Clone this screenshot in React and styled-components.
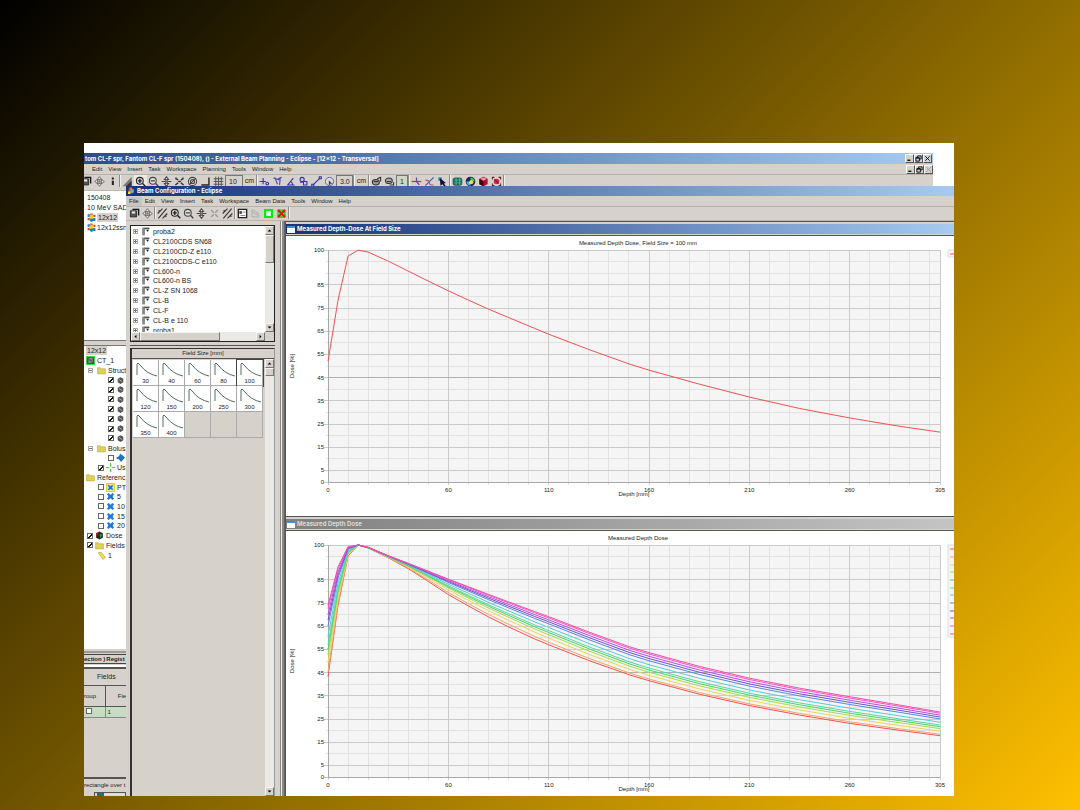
import React from "react"
import styled, { createGlobalStyle, css } from "styled-components"

const GlobalStyle = createGlobalStyle`
  * {
    box-sizing: border-box;
  }
  body {
    margin: 0;
    font-family: "Liberation Sans", Arial, sans-serif;
    font-size: 7px;
    color: #222;
  }
  button, input {
    font: inherit;
    color: inherit;
    margin: 0;
    padding: 0;
  }
`

const Slide = styled.main`
  display: flex;
  min-height: 100vh;
  padding: 143px 126px 14px 84px;
  background: linear-gradient(135deg, #000, #ffc000);
`

const Desktop = styled.div`
  position: relative;
  flex: 1;
  display: flex;
  min-width: 0;
  padding: 10px 21px 0 0;
  background: #fff;
  overflow: hidden;
`

const PlanningWindow = styled.section`
  flex: 1;
  display: flex;
  flex-direction: column;
  min-width: 0;
  background: #d6d2cb;
`

/* Floats over the planning window */
const ConfigWindow = styled.section`
  position: absolute;
  top: 43px;
  right: 0;
  bottom: 0;
  left: 42px;
  display: flex;
  flex-direction: column;
  background: #d6d2cb;
`

const titleColors = {
  back: "linear-gradient(90deg, #2b4c8e, #a6caf0)",
  front: "linear-gradient(90deg, #16327a, #a6caf0)",
  idle: "linear-gradient(90deg, #808080, #c4c4c4)",
}

const TitleBar = styled.header`
  flex: none;
  display: flex;
  align-items: center;
  gap: 2px;
  height: ${props => props.$height || 10}px;
  padding: 0 1px;
  background: ${props => titleColors[props.$kind]};
  color: ${props => (props.$kind === "idle" ? "#dedad2" : "#fff")};
  white-space: nowrap;
  overflow: hidden;
`

const Title = styled.h1`
  flex: 1;
  margin: 0;
  font-family: Inter, "Liberation Sans", sans-serif;
  font-size: 6px;
  line-height: 10px;
  font-weight: 700;
`

const MenuBar = styled.nav`
  flex: none;
  display: flex;
  align-items: center;
  height: ${props => props.$height}px;
  padding-left: ${props => props.$indent || 0}px;
  border-bottom: 1px solid #b2b2ae;
`

const MenuItem = styled.button`
  height: 9px;
  padding: 0 3px;
  border: 0;
  background: ${props => (props.$open ? "#c9c5be" : "none")};
  font-size: 6px;
  line-height: 9px;
`

const Spacer = styled.div`
  flex: 1;
`

const WindowButtons = styled.div`
  display: flex;
`

const WindowButton = styled.button`
  display: grid;
  place-items: center;
  width: 9px;
  height: 9px;
  border: 1px solid;
  border-color: #fff #555 #555 #fff;
  background: #d6d2cb;
  color: ${props => (props.$dim ? "#999" : "#000")};
`

const ToolBar = styled.div`
  flex: none;
  display: flex;
  align-items: flex-start;
  height: ${props => props.$height}px;
  margin-left: ${props => (props.$clipped ? "-4px" : "0")};
  padding-left: ${props => props.$indent || 0}px;
  border-bottom: 1px solid #bbb7b0;
  overflow: hidden;
`

const ToolButton = styled.button`
  flex: none;
  display: grid;
  place-items: center;
  width: 13px;
  height: 13px;
  border: 0;
  background: ${props => (props.$pressed ? "#ebe9e4" : "none")};
`

const Divider = styled.span`
  flex: none;
  width: 2px;
  height: 12px;
  border-left: 1px solid #8e8b85;
  border-right: 1px solid #f4f2ee;
`

const ToolInput = styled.input`
  flex: none;
  width: ${props => props.$width}px;
  height: 12px;
  padding-left: 3px;
  border: 1px solid #777;
  background: ${props => (props.$green ? "#c5dcc3" : "#d6d2cb")};
  font-size: 7px;
`

const Unit = styled.span`
  width: 13px;
  text-align: center;
  font-size: 7px;
  line-height: 12px;
`

/* Left edge of the planning window */
const PlanPane = styled.div`
  flex: 1;
  display: flex;
  flex-direction: column;
  width: 42px;
  overflow: hidden;
`

const PatientTree = styled.ul`
  flex: none;
  height: 150px;
  margin: 0;
  padding: 1px 0 0 3px;
  border-bottom: 1px solid #777;
  background: #fff;
  list-style: none;
  white-space: nowrap;
`

const PatientRow = styled.li`
  display: flex;
  align-items: center;
  gap: 1px;
  height: 10px;
  font-size: 7px;
`

const Mark = styled.span`
  padding: 1px;
  background: #d6d2cb;
`

const StructurePane = styled.div`
  flex: 1;
  margin-top: 4px;
  border-top: 1px solid #777;
  background: #fff;
`

const StructureTree = styled.ul`
  display: grid;
  grid-auto-rows: 1fr;
  height: 214px;
  margin: 0;
  padding: 0;
  list-style: none;
`

const StructureRow = styled.li`
  display: flex;
  align-items: center;
  gap: 2px;
  min-height: 0;
  padding-left: ${props => props.$depth}px;
  white-space: nowrap;
  font-size: 7px;
`

const Expander = styled.span`
  flex: none;
  display: grid;
  place-items: center;
  width: 5px;
  height: 5px;
  border: 1px solid #aaa;
  background: ${props =>
    props.$plus
      ? "linear-gradient(#777, #777) center / 1px 3px no-repeat #fff"
      : "#fff"};
  &:before {
    content: "";
    width: 3px;
    height: 1px;
    background: #777;
  }
  ${props =>
    !props.$plus &&
    css`
      margin-right: 2px;
    `}
`

const CheckBox = styled.input.attrs({ type: "checkbox" })`
  appearance: none;
  flex: none;
  width: 6px;
  height: 6px;
  border: 1px solid #666;
  background: #fff;
  &:checked {
    background: linear-gradient(135deg, #fff 45%, #111 45% 70%, #fff 70%);
  }
`

const TabStrip = styled.div`
  flex: none;
  display: flex;
  align-items: center;
  height: 16px;
  margin-top: 2px;
  border-top: 2px solid #999;
  border-bottom: 2px solid #fff;
`

const Tab = styled.button`
  height: 10px;
  padding: 0 1px 0 0;
  border: 0;
  border-top: 1px solid #444;
  border-bottom: 1px solid #444;
  background: none;
  font-size: 6px;
  font-weight: 700;
  white-space: nowrap;
`

const FieldsCaption = styled.h2`
  flex: none;
  height: 18px;
  margin: 0;
  padding-left: 13px;
  border-top: 2px solid #555;
  font-size: 7px;
  line-height: 15px;
  font-weight: 400;
`

const FieldsTable = styled.table`
  flex: none;
  width: 60px;
  border-collapse: collapse;
  border-top: 1px solid #555;
  table-layout: fixed;
  font-size: 6px;
  th {
    height: 21px;
    padding: 0;
    border-right: 1px solid #555;
    border-bottom: 1px solid #555;
    font-weight: 400;
  }
  th:first-child, td:first-child {
    width: 21px;
    text-align: left;
  }
  td {
    height: 11px;
    padding: 0 2px;
    border-right: 1px solid #888;
    border-bottom: 1px solid #888;
    background: #c5dcc3;
    line-height: 7px;
  }
`

const StatusArea = styled.div`
  flex: none;
  height: 78px;
  display: flex;
  flex-direction: column;
  justify-content: flex-end;
`

const StatusText = styled.p`
  margin: 0;
  border-top: 2px solid #555;
  font-size: 6px;
  line-height: 13px;
  white-space: nowrap;
`

const TaskStrip = styled.div`
  height: 4px;
  margin-left: 10px;
  border: 1px solid #555;
  border-bottom: 0;
  background: linear-gradient(90deg, #d6d2cb 2px, #177 2px 9px, #ddd 9px);
`

/* Beam configuration body */
const ConfigBody = styled.div`
  flex: 1;
  display: flex;
  min-height: 0;
`

const SideBar = styled.aside`
  flex: none;
  display: flex;
  flex-direction: column;
  width: 149px;
  padding: 4px 0 0 4px;
`

const MachineBox = styled.div`
  flex: none;
  display: grid;
  grid-template: 106px 9px / minmax(0, 1fr) 9px;
  border: 1px solid #222;
  background: #fff;
`

const MachineList = styled.ul`
  margin: 0;
  padding: 1px 0 0;
  list-style: none;
  overflow: hidden;
`

const MachineRows = styled.div`
  display: grid;
  grid-auto-rows: 1fr;
  height: 108px;
`

const Machine = styled.li`
  display: flex;
  align-items: center;
  gap: 3px;
  padding-left: 2px;
  font-size: 7px;
  line-height: 9px;
  white-space: nowrap;
`

const ScrollTrack = styled.div`
  display: flex;
  flex-direction: ${props => (props.$across ? "row" : "column")};
  background: #ebe9e5;
`

const ScrollButton = styled.button`
  flex: none;
  display: grid;
  place-items: center;
  width: 9px;
  height: 9px;
  border: 1px solid;
  border-color: #f6f4f0 #777 #777 #f6f4f0;
  background: #d6d2cb;
`

const ScrollThumb = styled.div`
  flex: none;
  width: ${props => (props.$across ? props.$size + "px" : "9px")};
  height: ${props => (props.$across ? "9px" : props.$size + "px")};
  border: 1px solid;
  border-color: #f6f4f0 #777 #777 #f6f4f0;
  background: #d6d2cb;
`

const Corner = styled.div`
  background: #d6d2cb;
`

const FieldPanel = styled.section`
  flex: 1;
  display: flex;
  flex-direction: column;
  min-height: 0;
  margin-top: 3px;
  border-top: 1px solid #555;
`

const FieldFrame = styled.div`
  flex: 1;
  display: flex;
  flex-direction: column;
  min-height: 0;
  margin-top: 2px;
  border: 1px solid #333;
  border-left-width: 2px;
  border-right-color: #999;
  border-bottom: 0;
`

const FieldHeading = styled.h2`
  flex: none;
  height: 10px;
  margin: 0;
  border-bottom: 1px solid #555;
  font-size: 6px;
  line-height: 9px;
  font-weight: 400;
  text-align: center;
`

const FieldArea = styled.div`
  flex: 1;
  display: grid;
  grid-template-columns: minmax(0, 1fr) 9px;
  min-height: 0;
`

const FieldGrid = styled.div`
  display: grid;
  grid-template-columns: repeat(5, 26px);
  grid-auto-rows: 26px;
  align-content: start;
  padding: 1px 0 0 1px;
`

const FieldCell = styled.button`
  display: flex;
  flex-direction: column;
  align-items: center;
  justify-content: flex-end;
  border: 0;
  border-right: 1px solid #aaa;
  border-bottom: 1px solid #aaa;
  background: ${props => (props.$empty ? "#d6d2cb" : "#fff")};
  font-size: 6px;
  line-height: 7px;
  ${props =>
    props.$selected &&
    css`
      outline: 1px solid #444;
    `}
`

const Splitter = styled.div`
  flex: none;
  width: 10px;
  border-left: 5px solid #d6d2cb;
  border-right: 1px solid #666;
  background: linear-gradient(90deg, #888 1px, #eee 1px 2px, #8d8a85 2px);
`

const ChartStack = styled.div`
  flex: 1;
  display: flex;
  flex-direction: column;
  min-width: 0;
  border-top: 1px solid #555;
  border-left: 1px solid #555;
  overflow: hidden;
`

const ChartWindow = styled.section`
  flex: none;
  padding-top: 2px;
  border-bottom: 1px solid #555;
`

const ChartBody = styled.div`
  margin-top: 1px;
  border-top: 1px solid #555;
  background: #fff;
  svg {
    display: block;
    width: 100%;
    height: auto;
  }
`

const PageIcon = styled.span`
  flex: none;
  width: 8px;
  height: 7px;
  border-top: 2px solid #3a8ee0;
  background: #fff;
`

// Toolbar drawings, all on a 16 x 16 grid
const glyphs = {
  disk: (
    <>
      <path d="M2 4h9v9H2z" fill="#555" stroke="#111" />
      <path d="M5 2h9v9" fill="none" stroke="#111" strokeWidth="2" />
      <path d="M4 5h5v3H4z" fill="#eee" />
    </>
  ),
  move: (
    <path
      d="M8 1l3 4H5zM8 15l3-4H5zM1 8l4-3v6zM15 8l-4-3v6zM7 7h2v2H7z"
      fill="#eee"
      stroke="#444"
    />
  ),
  dots: <path d="M7 2h3v3H7zM7 7h3v6H7z" fill="#222" />,
  ramp: (
    <>
      <path d="M14 1v14H1z" fill="#777" />
      <path d="M14 7v8H6z" fill="#333" />
    </>
  ),
  zoomIn: (
    <g fill="none" stroke="#222" strokeWidth="1.5">
      <circle cx="7" cy="7" r="5" fill="#ddd" />
      <path d="M4 7h6M7 4v6M11 11l4 4" strokeWidth="2" />
    </g>
  ),
  zoomOut: (
    <g fill="none" stroke="#444" strokeWidth="1.5">
      <circle cx="7" cy="7" r="5" fill="#ddd" />
      <path d="M4 7h6M11 11l4 4" strokeWidth="2" />
    </g>
  ),
  pan: (
    <g fill="#ddd" stroke="#444" strokeWidth="1.5">
      <path d="M8 1l3 4H9v6h2l-3 4-3-4h2V5H5z" />
      <path d="M1 8h5M10 8h5" />
    </g>
  ),
  fit: (
    <path
      d="M2 3l4 3M14 3l-4 3M2 13l4-3M14 13l-4-3M6 8h4M3 2v3M13 2v3"
      fill="none"
      stroke="#333"
      strokeWidth="2"
    />
  ),
  fitDim: (
    <path
      d="M3 3l4 4M13 3l-4 4M3 13l4-4M13 13l-4-4"
      fill="none"
      stroke="#999"
      strokeWidth="2"
    />
  ),
  target: (
    <g fill="none" stroke="#444" strokeWidth="1.5">
      <circle cx="8" cy="8" r="6" />
      <circle cx="8" cy="8" r="3" />
      <path d="M3 13L13 3" />
    </g>
  ),
  corner: <path d="M13 2v11H2" fill="none" stroke="#222" strokeWidth="2" />,
  grid: (
    <path
      d="M4 1v14M8 1v14M12 1v14M1 4h14M1 8h14M1 12h14"
      stroke="#555"
      fill="none"
      strokeWidth="1.4"
    />
  ),
  plusA: (
    <g fill="none" stroke="#3535a0" strokeWidth="1.6">
      <path d="M1 8h9M6 3v9" />
      <circle cx="12" cy="11" r="2" />
    </g>
  ),
  fan: (
    <path
      d="M2 3l10 3M4 2l4 10M12 2l-1 11M9 4l5-2"
      fill="none"
      stroke="#4a4ab0"
      strokeWidth="1.6"
    />
  ),
  angle: (
    <path
      d="M12 3L4 13h10M8 8q3 1 3 5"
      fill="none"
      stroke="#3535a0"
      strokeWidth="1.6"
    />
  ),
  shapes: (
    <g fill="none" stroke="#3535a0" strokeWidth="1.6">
      <circle cx="6" cy="5" r="3" />
      <path d="M8 8h5v5H8zM3 9h4" />
    </g>
  ),
  line: (
    <g fill="none" stroke="#3535a0" strokeWidth="1.6">
      <path d="M3 13L13 3" />
      <path d="M1 12h3v3H1zM12 1h3v3h-3z" />
    </g>
  ),
  pick: (
    <g>
      <circle cx="8" cy="8" r="6" fill="#ddd" stroke="#3535a0" />
      <path d="M7 6v8l3-3 3 1z" fill="#444" />
    </g>
  ),
  turn: (
    <g fill="none" stroke="#333" strokeWidth="1.6">
      <ellipse cx="7" cy="9" rx="5" ry="4" fill="#999" />
      <path d="M9 4l5-2v6M4 8h6" />
    </g>
  ),
  turnBack: (
    <g fill="none" stroke="#333" strokeWidth="1.6">
      <ellipse cx="7" cy="7" rx="5" ry="4" fill="#aaa" />
      <path d="M8 13h6v-4M4 8h6" />
    </g>
  ),
  cross: (
    <g fill="none" strokeWidth="1.8">
      <path d="M1 8h14" stroke="#c33" />
      <path d="M8 2v6l4 5" stroke="#45a" />
    </g>
  ),
  curve: (
    <g fill="none" strokeWidth="1.6">
      <path d="M2 14L14 2" stroke="#45a" />
      <path d="M2 6q6 0 6 4t6 3" stroke="#b55" />
    </g>
  ),
  wand: (
    <g>
      <path d="M2 2h5v5H2z" fill="#28c" />
      <path d="M4 3l9 7-3 1 3 4-2 1-3-4-3 2z" fill="#113" />
    </g>
  ),
  globe: (
    <g>
      <rect x="1" y="2" width="14" height="12" rx="4" fill="#264" />
      <path d="M3 6h11M3 10h11M6 3v10M11 3v10" stroke="#4cd" />
    </g>
  ),
  rainbow: (
    <g>
      <circle cx="8" cy="8" r="7" fill="#225" />
      <path d="M8 2a6 6 0 0 1 6 6H8z" fill="#3c5" />
      <path d="M8 14a6 6 0 0 1-6-6h6z" fill="#3bd" />
      <circle cx="9" cy="9" r="3" fill="#fd3" />
    </g>
  ),
  cube: (
    <g>
      <path d="M8 1l6 3v8l-6 3-6-3V4z" fill="#a13" />
      <path d="M8 8v7l-6-3V4z" fill="#401" />
      <path d="M8 2l5 2-5 3-5-3z" fill="#e9a" />
    </g>
  ),
  redX: (
    <g>
      <circle cx="8" cy="8" r="4" fill="#d24" />
      <path
        d="M2 5V2h3M11 2h3v3M2 11v3h3M11 14h3v-3M5 5l6 6"
        fill="none"
        stroke="#622"
        strokeWidth="1.5"
      />
    </g>
  ),
  slashes: (
    <path
      d="M1 8L8 1M2 15L14 1M8 15l7-7M2 4h4M10 12h4"
      stroke="#333"
      strokeWidth="1.6"
      fill="none"
    />
  ),
  report: (
    <g>
      <path d="M2 2h12v12H2z" fill="#fff" stroke="#222" strokeWidth="2" />
      <path d="M4 5h3v3H4zM5 11h7M9 6h3" fill="#347" stroke="#444" />
    </g>
  ),
  decay: (
    <path
      d="M3 2v11h11M3 4q3 6 11 7M5 2q2 5 8 6"
      fill="none"
      stroke="#aaa"
      strokeWidth="1.4"
    />
  ),
  greenBox: (
    <path d="M3 3h10v10H3z" fill="#dfd" stroke="#0e1" strokeWidth="3" />
  ),
  redBox: (
    <g fill="none">
      <path d="M3 3h10v10H3z" fill="#dc5" stroke="#1c2" strokeWidth="2" />
      <path d="M3 3l10 10M13 3L3 13" stroke="#e11" strokeWidth="3" />
    </g>
  ),
  fourColor: (
    <g>
      <path d="M1 2h5v5H1zM10 9h5v5h-5z" fill="#2a7de0" />
      <path d="M6 1h4v4H6zM1 9h4v4H1zM11 3h4v4h-4z" fill="#e43" />
      <circle cx="8" cy="7" r="4" fill="#f6d11a" />
      <path d="M5 10h6v4l-3 2-3-2z" fill="#18b" />
    </g>
  ),
  folder: <path d="M1 3h5l2 2h7v9H1z" fill="#ded05a" stroke="#b5a637" />,
  organ: (
    <g>
      <path d="M8 2l5 3v6l-5 3-5-3V5z" fill="#555" />
      <path d="M5 6l6 4" stroke="#bbb" strokeWidth="1.5" />
    </g>
  ),
  blueX: (
    <g>
      <path d="M4 5h8v6H4z" fill="#27d" />
      <path d="M3 3l10 10M13 3L3 13" stroke="#27d" strokeWidth="4" />
    </g>
  ),
  blueXMarked: (
    <g>
      <path d="M1 1h14v14H1z" fill="#f3ee9a" stroke="#e2d22a" strokeWidth="2" />
      <path d="M5 5h6v6H5z" fill="#27d" />
      <path d="M4 4l8 8M12 4l-8 8" stroke="#27d" strokeWidth="3" />
    </g>
  ),
  slab: <path d="M1 9l4-2 3-5 7 6-6 7-3-4z" fill="#17c" stroke="#036" />,
  origin: (
    <path
      d="M8 0v6M8 10v6M0 8h6M10 8h6"
      stroke="#3fcf4f"
      strokeWidth="2"
      fill="none"
    />
  ),
  ct: (
    <g>
      <path d="M1 1h14v14H1z" fill="#344" stroke="#3d4" strokeWidth="2" />
      <path d="M4 5l3-2h5v8l-3 2H4z" fill="#889" />
      <path d="M5 7h4v4" stroke="#222" fill="none" />
    </g>
  ),
  dose: (
    <g>
      <path d="M8 1l6 3v8l-6 3-6-3V4z" fill="#132" />
      <path d="M8 1L2 4v8z" fill="#b12" />
      <path d="M8 6l5-1-3 8z" fill="#2a4" />
    </g>
  ),
  beam: <path d="M2 3l5-1 8 9-4 4z" fill="#f0e24c" stroke="#a89a1c" />,
  linac: (
    <g>
      <path d="M2 1h5v14H2z" fill="#888" />
      <path d="M6 1h9v3H6z" fill="#555" />
      <path d="M9 5h5l-2 4z" fill="#222" />
    </g>
  ),
  app: (
    <g>
      <path d="M3 3h10v10H3z" fill="#d33" />
      <circle cx="10" cy="8" r="4" fill="#4bd" />
      <path d="M2 9h5v5H2z" fill="#fd3" />
      <path d="M5 1h5v4H5z" fill="#e72" />
    </g>
  ),
  minimize: <path d="M3 12h7" stroke="currentColor" strokeWidth="3" />,
  restore: (
    <path
      d="M6 6V2h8v7h-4M2 6h8v8H2zM2 7h8"
      fill="none"
      stroke="currentColor"
      strokeWidth="2"
    />
  ),
  close: (
    <path
      d="M3 3l10 10M13 3L3 13"
      fill="none"
      stroke="currentColor"
      strokeWidth="2"
    />
  ),
  up: <path d="M2 11l6-6 6 6z" />,
  down: <path d="M2 5l6 6 6-6z" />,
  left: <path d="M11 2L5 8l6 6z" />,
  right: <path d="M5 2l6 6-6 6z" />,
}

const Glyph = styled.svg.attrs({ viewBox: "0 0 16 16" })`
  flex: none;
  display: block;
  width: ${props => props.$size}px;
  height: ${props => props.$size}px;
`

function Icon({ name, size = 11 }) {
  return (
    <Glyph $size={size} aria-hidden="true">
      {glyphs[name]}
    </Glyph>
  )
}

function Tools({ names, pressed }) {
  return names.map((name, i) => (
    <ToolButton key={i} aria-label={name} $pressed={name === pressed}>
      <Icon name={name} />
    </ToolButton>
  ))
}

function Menus({ names, open }) {
  return names.map(name => (
    <MenuItem key={name} $open={name === open}>
      {name}
    </MenuItem>
  ))
}

function WindowControls({ dim }) {
  return (
    <WindowButtons>
      <WindowButton aria-label="Minimize">
        <Icon name="minimize" size={7} />
      </WindowButton>
      <WindowButton aria-label="Restore">
        <Icon name="restore" size={7} />
      </WindowButton>
      <WindowButton aria-label="Close" $dim={dim}>
        <Icon name="close" size={7} />
      </WindowButton>
    </WindowButtons>
  )
}

const structureRows = [
  { depth: 2, mark: true, label: "12x12" },
  { depth: 2, icon: "ct", label: "CT_1" },
  { depth: 4, expander: true, icon: "folder", label: "Struct" },
  ...Array.from({ length: 7 }, () => ({ depth: 24, checked: true, icon: "organ" })),
  { depth: 4, expander: true, icon: "folder", label: "Bolus" },
  { depth: 24, checked: false, icon: "slab" },
  { depth: 14, checked: true, icon: "origin", label: "Us" },
  { depth: 2, icon: "folder", label: "Referenc" },
  { depth: 14, checked: false, icon: "blueXMarked", label: "PT" },
  { depth: 14, checked: false, icon: "blueX", label: "5" },
  { depth: 14, checked: false, icon: "blueX", label: "10" },
  { depth: 14, checked: false, icon: "blueX", label: "15" },
  { depth: 14, checked: false, icon: "blueX", label: "20" },
  { depth: 3, checked: true, icon: "dose", label: "Dose" },
  { depth: 3, checked: true, icon: "folder", label: "Fields" },
  { depth: 13, icon: "beam", label: "1" },
]

const machines = [
  "proba2",
  "CL2100CDS SN68",
  "CL2100CD-Z e110",
  "CL2100CDS-C e110",
  "CL600-n",
  "CL600-n BS",
  "CL-Z SN 1068",
  "CL-B",
  "CL-F",
  "CL-B e 110",
  "proba1",
]

const fieldSizes = [30, 40, 60, 80, 100, 120, 150, 200, 250, 300, 350, 400]

// Chart geometry: 2 px per mm, plot area 612 x 232
const plot = { left: 42, width: 612, height: 232 }
const depthTicks = [0, 60, 110, 160, 210, 260, 305]
const doseTicks = [100, 85, 75, 65, 55, 45, 35, 25, 15, 5, 0]

const px = depth => plot.left + (depth / 305) * plot.width
const py = (dose, top) => top + ((100 - dose) / 100) * plot.height

const depths = [
  0, 5, 10, 15, 20, 30, 40, 50, 60, 70, 80, 90, 103, 110, 130, 150, 160, 185,
  210, 235, 260, 285, 305,
]
const dose100 = [
  52, 78.4, 97.4, 99.9, 99.1, 95.2, 90.9, 86.6, 82.4, 78.4, 74.5, 70.9, 66.2,
  63.7, 57.1, 50.9, 48.2, 42.2, 36.6, 31.7, 27.6, 24, 21.5,
]
const doseLow = [
  43.4, 74, 95.2, 100, 98.7, 94.5, 89.8, 84.3, 78.6, 73.7, 69, 64.7, 59.5, 57,
  50.2, 44.1, 41.5, 35.7, 30.8, 26.7, 23.1, 20.1, 17.8,
]
const doseHigh = [
  74, 90.6, 99.3, 100, 99, 95.4, 92.1, 88.7, 85.3, 82, 78.7, 75.5, 71.3, 69.1,
  62.5, 56.2, 53.6, 47.7, 42.6, 38.3, 34.6, 31, 28,
]

const series = [
  { color: "#f55050", mix: 0 },
  { color: "#f5a565", mix: 0.06 },
  { color: "#ead55a", mix: 0.19 },
  { color: "#a5dc50", mix: 0.3 },
  { color: "#4fd35f", mix: 0.38 },
  { color: "#4fdca0", mix: 0.45 },
  { color: "#59cbd8", mix: 0.57 },
  { color: "#5a86dd", mix: 0.71 },
  { color: "#6f50d2", mix: 0.79 },
  { color: "#b84ce0", mix: 0.87 },
  { color: "#f34fdc", mix: 0.95 },
  { color: "#f5509a", mix: 1 },
]

// Small fields drop faster just past the maximum, so the curves bunch at the top
function mixDose(low, high, mix, depth) {
  const spread = depth > 20 && depth < 160 ? 1 - (0.4 * (160 - depth)) / 140 : 1
  return low + (high - low) * Math.pow(mix, spread)
}

function points(doses, top) {
  return doses.map((dose, i) => `${px(depths[i])},${py(dose, top)}`).join(" ")
}

const Label = styled.text`
  font-size: 6px;
  fill: #222;
`

function DoseChart({ title, top, height, curves }) {
  const bottom = top + plot.height
  const right = plot.left + plot.width
  const minorDepths = Array.from({ length: 30 }, (_, i) => i * 10 + 10)
  const minorDoses = Array.from({ length: 20 }, (_, i) => i * 5)
  return (
    <svg viewBox={`0 0 668 ${height}`} role="img" aria-label={title}>
      <rect
        x={plot.left}
        y={top}
        width={plot.width}
        height={plot.height}
        fill="#f5f5f5"
      />
      <g stroke="#e2e2e2" shapeRendering="crispEdges">
        {minorDepths.map(d => (
          <path key={d} d={`M${px(d)} ${top}V${bottom + 3}`} />
        ))}
        {minorDoses.map(d => (
          <path key={d} d={`M${plot.left - 2} ${py(d, top)}H${right}`} />
        ))}
      </g>
      <g stroke="#cbcbcb" shapeRendering="crispEdges">
        {depthTicks.map(d => (
          <path key={d} d={`M${px(d)} ${top}V${bottom + 3}`} />
        ))}
        {doseTicks.map(d => (
          <path key={d} d={`M${plot.left - 4} ${py(d, top)}H${right}`} />
        ))}
        <path stroke="#a8a8a8" d={`M${plot.left} ${top}V${bottom}H${right}`} fill="none" />
        <path stroke="#b0b0b0" d={`M${plot.left} ${py(45, top)}H${right}`} />
      </g>
      {depthTicks.map(d => (
        <Label key={d} x={px(d)} y={bottom + 10} textAnchor="middle">
          {d}
        </Label>
      ))}
      {doseTicks.map(d => (
        <Label key={d} x={plot.left - 4} y={py(d, top) + 2} textAnchor="end">
          {d}
        </Label>
      ))}
      <Label x="352" y={top - 5} textAnchor="middle">
        {title}
      </Label>
      <Label x="348" y={bottom + 14} textAnchor="middle">
        Depth [mm]
      </Label>
      <Label transform={`translate(8 ${top + 116}) rotate(-90)`} textAnchor="middle">
        Dose [%]
      </Label>
      {curves.map((curve, i) => (
        <polyline
          key={i}
          points={points(curve.doses, top)}
          fill="none"
          stroke={curve.color}
        />
      ))}
      <rect
        x="662"
        y={top}
        width="8"
        height={curves.length * 7 + 8 - (curves.length === 1 ? 8 : 0)}
        fill="#f5f5f5"
        stroke="#ddd"
      />
      {curves.map((curve, i) => (
        <path key={i} d={`M664 ${top + 4 + i * 8 - Math.floor(i / 3)}h6`} stroke={curve.color} />
      ))}
    </svg>
  )
}

function PlanningApp() {
  return (
    <PlanningWindow>
      <TitleBar $kind="back" $height={11}>
        <Title>
          tom CL-F spr, Fantom CL-F spr (150408), () - External Beam Planning -
          Eclipse - [12x12 - Transversal]
        </Title>
        <WindowControls />
      </TitleBar>
      <MenuBar $height={11} $indent={5}>
        <Menus
          names={["Edit", "View", "Insert", "Task", "Workspace", "Planning", "Tools", "Window", "Help"]}
        />
        <Spacer />
        <WindowControls dim />
      </MenuBar>
      <ToolBar $height={16} $clipped>
        <Tools names={["disk", "move", "dots"]} />
        <Divider />
        <Tools
          names={["ramp", "zoomIn", "zoomOut", "pan", "fit", "target", "corner", "grid"]}
          pressed="zoomIn"
        />
        <ToolInput $width={18} defaultValue="10" aria-label="Grid spacing" />
        <Unit>cm</Unit>
        <Divider />
        <Tools names={["plusA", "fan", "angle", "shapes", "line", "pick"]} />
        <ToolInput $width={17} defaultValue="3.0" aria-label="Brush size" />
        <Divider />
        <Unit>cm</Unit>
        <Divider />
        <Tools names={["turn", "turnBack"]} />
        <ToolInput $width={12} $green defaultValue="1" aria-label="Slice" />
        <Divider />
        <Tools names={["cross", "curve", "wand"]} />
        <Divider />
        <Tools names={["globe", "rainbow", "cube", "redX"]} />
        <Divider />
      </ToolBar>
      <PlanPane>
        <PatientTree>
          <PatientRow>150408</PatientRow>
          <PatientRow>10 MeV SAD</PatientRow>
          <PatientRow>
            <Icon name="fourColor" size={9} />
            <Mark>12x12</Mark>
          </PatientRow>
          <PatientRow>
            <Icon name="fourColor" size={9} />
            12x12ssn
          </PatientRow>
        </PatientTree>
        <StructurePane>
          <StructureTree>
            {structureRows.map((row, i) => (
              <StructureRow key={i} $depth={row.depth}>
                {row.expander && <Expander />}
                {row.checked !== undefined && (
                  <CheckBox
                    defaultChecked={row.checked}
                    aria-label={row.label || row.icon}
                  />
                )}
                {row.icon && <Icon name={row.icon} size={9} />}
                {row.mark ? <Mark>{row.label}</Mark> : row.label}
              </StructureRow>
            ))}
          </StructureTree>
        </StructurePane>
        <TabStrip>
          <Tab>ection )</Tab>
          <Tab>Regist</Tab>
        </TabStrip>
        <FieldsCaption>Fields</FieldsCaption>
        <FieldsTable>
          <thead>
            <tr>
              <th>roup</th>
              <th>Field</th>
            </tr>
          </thead>
          <tbody>
            <tr>
              <td>
                <CheckBox aria-label="Group" />
              </td>
              <td>1</td>
            </tr>
          </tbody>
        </FieldsTable>
        <StatusArea>
          <StatusText>rectangle over t</StatusText>
          <TaskStrip />
        </StatusArea>
      </PlanPane>
    </PlanningWindow>
  )
}

function MachineTree() {
  return (
    <MachineBox>
      <MachineList>
        <MachineRows>
          {machines.map(name => (
            <Machine key={name}>
              <Expander $plus />
              <Icon name="linac" size={9} />
              {name}
            </Machine>
          ))}
        </MachineRows>
      </MachineList>
      <ScrollTrack>
        <ScrollButton aria-label="Scroll up">
          <Icon name="up" size={5} />
        </ScrollButton>
        <ScrollThumb $size={28} />
        <Spacer />
        <ScrollButton aria-label="Scroll down">
          <Icon name="down" size={5} />
        </ScrollButton>
      </ScrollTrack>
      <ScrollTrack $across>
        <ScrollButton aria-label="Scroll left">
          <Icon name="left" size={5} />
        </ScrollButton>
        <ScrollThumb $across $size={80} />
        <Spacer />
        <ScrollButton aria-label="Scroll right">
          <Icon name="right" size={5} />
        </ScrollButton>
      </ScrollTrack>
      <Corner />
    </MachineBox>
  )
}

function FieldPicker() {
  return (
    <FieldPanel>
      <FieldFrame>
        <FieldHeading>Field Size [mm]</FieldHeading>
        <FieldArea>
          <FieldGrid>
            {fieldSizes.map(size => (
              <FieldCell key={size} $selected={size === 100}>
                <svg width="24" height="17" aria-hidden="true">
                  <path
                    d="M3 14V3l1-1 2 2q7 9 17 11"
                    fill="none"
                    stroke="#50705f"
                  />
                </svg>
                {size}
              </FieldCell>
            ))}
            {[1, 2, 3].map(n => (
              <FieldCell key={n} $empty disabled aria-label="Empty" />
            ))}
          </FieldGrid>
          <ScrollTrack>
            <ScrollButton aria-label="Scroll up">
              <Icon name="up" size={5} />
            </ScrollButton>
            <ScrollThumb $size={8} />
            <Spacer />
            <ScrollButton aria-label="Scroll down">
              <Icon name="down" size={5} />
            </ScrollButton>
          </ScrollTrack>
        </FieldArea>
      </FieldFrame>
    </FieldPanel>
  )
}

function ConfigApp() {
  return (
    <ConfigWindow>
      <TitleBar $kind="front">
        <Icon name="app" size={8} />
        <Title>Beam Configuration - Eclipse</Title>
      </TitleBar>
      <MenuBar $height={11}>
        <Menus
          names={["File", "Edit", "View", "Insert", "Task", "Workspace", "Beam Data", "Tools", "Window", "Help"]}
          open="File"
        />
      </MenuBar>
      <ToolBar $height={14} $indent={2}>
        <Tools names={["disk", "move"]} />
        <Divider />
        <Tools names={["slashes", "zoomIn", "zoomOut", "pan", "fitDim", "slashes"]} />
        <Divider />
        <Tools names={["report", "decay", "greenBox", "redBox"]} />
        <Divider />
      </ToolBar>
      <ConfigBody>
        <SideBar>
          <MachineTree />
          <FieldPicker />
        </SideBar>
        <Splitter />
        <ChartStack>
          <ChartWindow>
            <TitleBar $kind="front">
              <PageIcon />
              <Title>Measured Depth-Dose At Field Size</Title>
            </TitleBar>
            <ChartBody>
              <DoseChart
                title="Measured Depth Dose, Field Size = 100 mm"
                top={14}
                height={280}
                curves={[{ color: "#f55050", doses: dose100 }]}
              />
            </ChartBody>
          </ChartWindow>
          <ChartWindow>
            <TitleBar $kind="idle">
              <PageIcon />
              <Title>Measured Depth Dose</Title>
            </TitleBar>
            <ChartBody>
              <DoseChart
                title="Measured Depth Dose"
                top={14}
                height={280}
                curves={series.map(({ color, mix }) => ({
                  color,
                  doses: doseLow.map((low, i) =>
                    mixDose(low, doseHigh[i], mix, depths[i])
                  ),
                }))}
              />
            </ChartBody>
          </ChartWindow>
        </ChartStack>
      </ConfigBody>
    </ConfigWindow>
  )
}

function App() {
  return (
    <>
      <GlobalStyle />
      <Slide>
        <Desktop>
          <PlanningApp />
          <ConfigApp />
        </Desktop>
      </Slide>
    </>
  )
}

export default App
